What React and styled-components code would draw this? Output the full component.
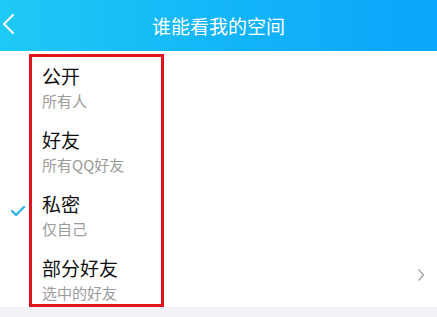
import React from "react";
import styled, { createGlobalStyle } from "styled-components";

const GlobalStyle = createGlobalStyle`
    html, body {
        margin: 0;
        padding: 0;
        background: #f3f3f7;
    }
    body {
        font-family: "Noto Sans CJK SC", "Noto Sans", sans-serif;
    }
`;

const Page = styled.div`
    width: 437px;
    height: 317px;
    overflow: hidden;
    background: #f3f3f7;
`;

const Header = styled.div`
    height: 51px;
    display: flex;
    align-items: center;
    justify-content: center;
    position: relative;
    background: linear-gradient(90deg, #1fc9f5 0%, #12b4f8 55%, #0aa6fb 100%);
`;

const BackButton = styled.div`
    position: absolute;
    left: 1px;
    top: 13px;
    width: 14px;
    height: 22px;
    display: flex;
`;

const Title = styled.div`
    color: #ffffff;
    font-size: 19px;
    line-height: 24px;
    margin-top: 1px;
`;

const List = styled.div`
    position: relative;
    background: #ffffff;
`;

const Row = styled.div`
    height: 64px;
    display: flex;
    align-items: stretch;
`;

const Mark = styled.div`
    width: 42px;
    display: flex;
    align-items: center;
    justify-content: center;
    padding-right: 6px;
    box-sizing: border-box;
`;

const Texts = styled.div`
    flex: 1;
    padding-top: 13px;
    display: flex;
    flex-direction: column;
`;

const Name = styled.div`
    font-size: 19px;
    line-height: 24px;
    color: #111111;
`;

const Desc = styled.div`
    font-size: 15px;
    line-height: 20px;
    color: #9b9b9b;
    margin-top: 3px;
`;

const Arrow = styled.div`
    width: 40px;
    display: flex;
    align-items: center;
    justify-content: center;
    padding-left: 8px;
    box-sizing: border-box;
`;

const Highlight = styled.div`
    position: absolute;
    left: 29px;
    top: 3px;
    width: 135px;
    height: 253px;
    border: 3px solid #e3131b;
    box-sizing: border-box;
    pointer-events: none;
`;

const options = [
    { name: "公开", desc: "所有人" },
    { name: "好友", desc: "所有QQ好友" },
    { name: "私密", desc: "仅自己", checked: true },
    { name: "部分好友", desc: "选中的好友", more: true },
];

function App() {
    return (
        <Page>
            <GlobalStyle />
            <Header>
                <BackButton>
                    <svg width="14" height="22" viewBox="0 0 14 22">
                        <polyline points="12,2 3,11 12,20" fill="none" stroke="#ffffff" strokeWidth="2" strokeLinecap="round" strokeLinejoin="round" />
                    </svg>
                </BackButton>
                <Title>谁能看我的空间</Title>
            </Header>
            <List>
                {options.map((o) => (
                    <Row key={o.name}>
                        <Mark>
                            {o.checked && (
                                <svg width="16" height="12" viewBox="0 0 16 12">
                                    <polyline points="2,6 6,10 14,2" fill="none" stroke="#2cb5ee" strokeWidth="2.4" strokeLinecap="round" strokeLinejoin="round" />
                                </svg>
                            )}
                        </Mark>
                        <Texts>
                            <Name>{o.name}</Name>
                            <Desc>{o.desc}</Desc>
                        </Texts>
                        <Arrow>
                            {o.more && (
                                <svg width="8" height="14" viewBox="0 0 8 14">
                                    <polyline points="2,2 6.5,7 2,12" fill="none" stroke="#a8a8ae" strokeWidth="1.6" strokeLinecap="round" strokeLinejoin="round" />
                                </svg>
                            )}
                        </Arrow>
                    </Row>
                ))}
                <Highlight />
            </List>
        </Page>
    );
}

export default App;
